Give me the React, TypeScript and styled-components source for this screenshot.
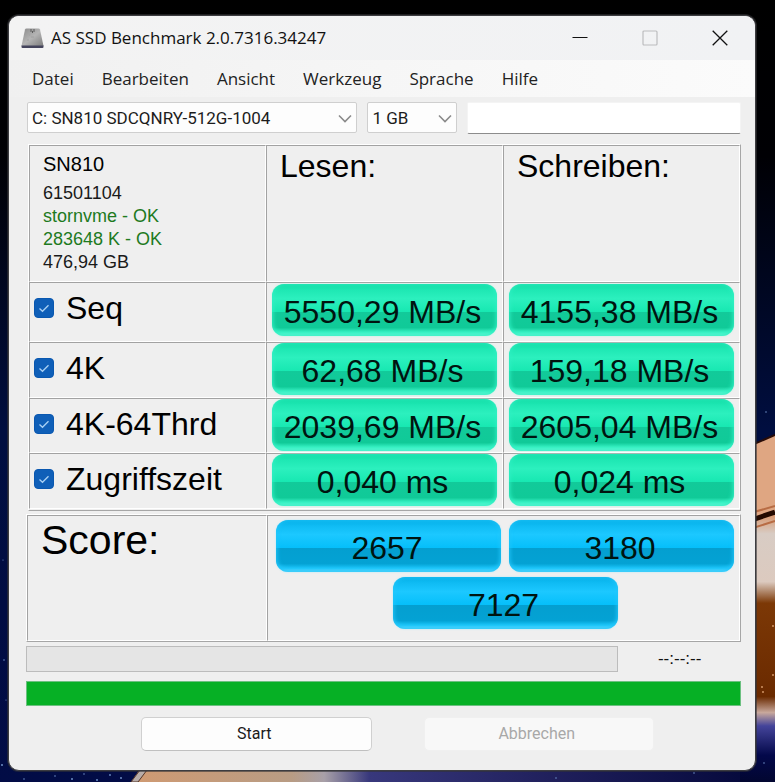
import React, { useState } from "react";
import styled, { createGlobalStyle } from "styled-components";

const GlobalStyle = createGlobalStyle`
  * { box-sizing: border-box; }
  body { margin: 0; background: #000; }
`;

const arial = `"Liberation Sans", Arial, sans-serif`;
const segoe = `"Open Sans", "Segoe UI", sans-serif`;
const dialog = `Roboto, "Liberation Sans", sans-serif`;

const Desktop = styled.div`
  position: relative;
  min-height: 100vh;
  padding: 15px 19px 11px 8px;
  overflow: hidden;
`;

const Wallpaper = styled.svg`
  position: absolute;
  inset: 0;
  width: 100%;
  height: 100%;
`;

const AppWindow = styled.main`
  position: relative;
  overflow: hidden;
  border: 1px solid #3c3c40;
  border-radius: 11px;
  background: #efefef;
  color: #000;
  box-shadow: 0 0 0 1px rgba(50, 50, 54, 0.6);
`;

const TitleBar = styled.header`
  display: flex;
  align-items: center;
  height: 44px;
  padding-left: 12px;
  background: linear-gradient(90deg, #f3f3f3, #f1f2f4);
`;

const Title = styled.h1`
  flex: 1;
  margin: 0 0 0 7px;
  font: 400 17px/24px ${segoe};
  color: #111;
  white-space: nowrap;
`;

const CaptionButton = styled.button`
  display: grid;
  place-items: center;
  width: 70px;
  height: 44px;
  padding: 0;
  border: 0;
  background: none;
  color: #111;
  &:disabled { color: #bcbcbe; }
`;

const MenuBar = styled.nav`
  display: flex;
  align-items: center;
  height: 37px;
  padding-left: 9px;
  background: linear-gradient(90deg, #f0f0f0, #f6f6f6 50%, #fbfbfb);
`;

const MenuItem = styled.button`
  padding: 0 14px;
  border: 0;
  background: none;
  font: 400 17px/24px ${segoe};
  color: #222;
`;

const Content = styled.div`
  padding: 5px 14px 19px 17px;
`;

const Toolbar = styled.div`
  display: flex;
  gap: 10px;
  margin: 0 0 10px 1px;
`;

const SelectBox = styled.div<{ $grow?: number; $width?: number }>`
  position: relative;
  flex: ${(p) => (p.$grow ? `${p.$grow} 1 0` : `0 0 ${p.$width}px`)};
  svg {
    position: absolute;
    right: 5px;
    top: 12px;
    pointer-events: none;
  }
`;

const Select = styled.select`
  appearance: none;
  display: block;
  width: 100%;
  height: 31px;
  padding: 0 24px 0 4px;
  border: 1px solid #cfcfcf;
  border-radius: 2px;
  background: #fdfdfd;
  font: 400 17px/28px ${dialog};
  color: #1c1c1c;
`;

const TextField = styled.input`
  flex: 272 1 0;
  min-width: 0;
  height: 32px;
  padding: 0;
  border: 1px solid #f4f4f4;
  border-bottom-color: #8c8c8c;
  border-radius: 2px;
  background: #fff;
  font: 400 17px/28px ${dialog};
`;

const Table = styled.table<{ $inset: number }>`
  width: calc(100% - ${(p) => p.$inset}px);
  margin-left: ${(p) => p.$inset}px;
  table-layout: fixed;
  border: 1px solid;
  border-color: #fff #a6a6a6 #a6a6a6 #fff;
  border-collapse: separate;
  border-spacing: 0;
  font-family: ${arial};
  th, td {
    padding: 0;
    border: 1px solid;
    border-color: #a2a2a2 #fff #fff #a2a2a2;
    vertical-align: top;
    text-align: left;
    font-weight: 400;
  }
`;

const ResultTable = styled(Table)`
  padding-bottom: 1px;
  margin-bottom: 3px;
`;

const ScoreTable = styled(Table)`
  margin-bottom: 4px;
`;

const ScoreLabelColumn = styled.col`
  width: 240px;
`;

const Row = styled.tr<{ $height: number }>`
  height: ${(p) => p.$height}px;
`;

const DriveInfo = styled.div`
  padding: 6px 0 0 13px;
  font-size: 18px;
  line-height: 23px;
  white-space: nowrap;
`;

const DriveName = styled.div`
  margin-bottom: 6px;
  font-size: 20px;
  line-height: 24px;
`;

const InfoLine = styled.div<{ $ok?: boolean }>`
  color: ${(p) => (p.$ok ? "#1e7a1e" : "#1a1a1a")};
`;

const ColumnTitle = styled.div`
  padding: 2px 0 0 13px;
  font-size: 32px;
  line-height: 36px;
`;

const ScoreTitle = styled.div`
  padding: 2px 0 0 13px;
  font-size: 41px;
  line-height: 44px;
`;

const TestLabel = styled.label`
  display: flex;
  align-items: center;
  gap: 12px;
  padding: 5px 0 0 4px;
  font-size: 32px;
  line-height: 40px;
  color: #000;
  white-space: nowrap;
`;

const CheckWrap = styled.span`
  position: relative;
  display: grid;
  width: 20px;
  height: 20px;
  svg {
    position: absolute;
    inset: 0;
    pointer-events: none;
  }
`;

const CheckInput = styled.input`
  appearance: none;
  width: 20px;
  height: 20px;
  margin: 0;
  border: 1px solid #8a8a8a;
  border-radius: 4px;
  background: #fff;
  &:checked { border-color: #0a58b0; background: #0f5fb8; }
`;

const ValueCell = styled.td<{ $top: number }>`
  && { padding: ${(p) => p.$top}px 5px 0; }
`;

const Pill = styled.div<{ $tone: "green" | "blue" }>`
  height: 52px;
  padding: 4px 4px 0 0;
  border-radius: 12px;
  background: ${(p) =>
    p.$tone === "green"
      ? "linear-gradient(#12dca4, #1fe8b4 12%, #2cf0be 28%, #18e8b2 53%, #12ca9a 54%, #10ca98 84%, #3af2c4 93%, #8cf8de)"
      : "linear-gradient(#06b0e8, #10bcf4 12%, #1cc8ff 28%, #06bffa 53%, #049fd0 54%, #04a2d4 84%, #1cc6fa 93%, #8ce4ff)"};
  box-shadow:
    inset 0 -1px 4px 1px ${(p) => (p.$tone === "green" ? "#30f0c4" : "#22c6fa")},
    0 0 2px ${(p) => (p.$tone === "green" ? "#a8f6e0" : "#a8e8fc")};
  font-size: 32px;
  line-height: 48px;
  text-align: center;
  white-space: nowrap;
  color: #001410;
`;

const ScoreGrid = styled.div`
  display: flex;
  flex-wrap: wrap;
  justify-content: center;
  gap: 5px 8px;
  padding: 4px 5px 0 8px;
  ${Pill} {
    width: calc((100% - 8px) / 2);
    padding-right: 3px;
  }
`;

const ProgressRow = styled.div`
  display: flex;
  align-items: center;
  margin-bottom: 9px;
`;

const ProgressTrack = styled.div`
  flex: 592 1 0;
  height: 26px;
  border: 1px solid #bcbcbc;
  background: #e5e5e5;
`;

const Clock = styled.div`
  flex: 123 1 0;
  text-align: center;
  font: 400 17px/24px ${arial};
  color: #111;
`;

const TotalProgress = styled.div`
  height: 25px;
  margin-bottom: 11px;
  border: 1px solid #6cc080;
  background: #06b025;
`;

const Actions = styled.div`
  display: flex;
  gap: 52px;
  padding: 0 87px 0 115px;
`;

const ActionButton = styled.button`
  flex: 1;
  height: 34px;
  padding: 0 4px 0 0;
  border: 1px solid #d0d0d0;
  border-bottom-color: #c0c0c0;
  border-radius: 5px;
  background: #fdfdfd;
  font: 400 16px/24px ${dialog};
  color: #1a1a1a;
  &:disabled {
    border-color: #f0f0f0;
    background: #f8f8f8;
    color: #a8a8a8;
  }
`;

const menus = ["Datei", "Bearbeiten", "Ansicht", "Werkzeug", "Sprache", "Hilfe"];

const tests = [
  { name: "Seq", read: "5550,29 MB/s", write: "4155,38 MB/s", height: 60, top: 1 },
  { name: "4K", read: "62,68 MB/s", write: "159,18 MB/s", height: 56, top: 0 },
  { name: "4K-64Thrd", read: "2039,69 MB/s", write: "2605,04 MB/s", height: 55, top: 0 },
  { name: "Zugriffszeit", read: "0,040 ms", write: "0,024 ms", height: 56, top: 0 },
];

function Chevron() {
  return (
    <svg width="14" height="9" viewBox="0 0 14 9" fill="none" aria-hidden="true">
      <path d="M1 1.5 7 7.5 13 1.5" stroke="#8a8a8a" strokeWidth="1.6" />
    </svg>
  );
}

function DriveIcon() {
  return (
    <svg width="23" height="21" viewBox="0 0 23 21" aria-hidden="true">
      <defs>
        <linearGradient id="drive" x1="0" y1="0" x2="1" y2="1">
          <stop offset="0" stopColor="#8a8a8a" />
          <stop offset="0.5" stopColor="#b4b4b4" />
          <stop offset="1" stopColor="#7c7c7c" />
        </linearGradient>
      </defs>
      <path d="M4 1.5Q4.3.5 5.5.5H17.5Q18.7.5 19 1.5L22.5 18H.5Z" fill="url(#drive)" />
      <path d="M.5 17.500H22.5V19Q22.5 20 21.5 20H1.5Q.5 20 .5 19Z" fill="#44445c" />
      <path d="M10 1V4M13 1V4M11.5 3V5" stroke="#5c5c5c" strokeWidth="1" />
      <path d="M6 12h2M10 9h3M15 12h2M8 7h1" stroke="#a0a0a0" strokeWidth="1" />
    </svg>
  );
}

function Scene() {
  return (
    <Wallpaper viewBox="0 0 775 782" preserveAspectRatio="none" aria-hidden="true">
      <defs>
        <linearGradient id="sky" x1="0" y1="0" x2="0" y2="1">
          <stop offset="0" stopColor="#000" />
          <stop offset="0.2" stopColor="#000004" />
          <stop offset="0.55" stopColor="#000e40" />
          <stop offset="1" stopColor="#020c46" />
        </linearGradient>
        <linearGradient id="planet" gradientUnits="userSpaceOnUse" x1="0" y1="515" x2="0" y2="782">
          <stop offset="0" stopColor="#d89870" />
          <stop offset="0.07" stopColor="#d8ccc4" />
          <stop offset="0.25" stopColor="#dccabf" />
          <stop offset="0.33" stopColor="#7c3806" />
          <stop offset="0.68" stopColor="#6a2a00" />
          <stop offset="0.74" stopColor="#c8a89c" />
          <stop offset="0.79" stopColor="#44449a" />
          <stop offset="0.9" stopColor="#03084a" />
          <stop offset="1" stopColor="#020630" />
        </linearGradient>
        <linearGradient id="floor" x1="0" y1="0" x2="1" y2="0">
          <stop offset="0" stopColor="#d09a72" />
          <stop offset="0.25" stopColor="#b89c84" />
          <stop offset="0.3" stopColor="#a8a0a8" />
          <stop offset="0.37" stopColor="#38387c" />
          <stop offset="0.65" stopColor="#20205c" />
          <stop offset="1" stopColor="#020638" />
        </linearGradient>
      </defs>
      <rect width="775" height="782" fill="url(#sky)" />
      <path d="M145 762H775V782H131Z" fill="url(#floor)" />
      <path d="M146 762 131 782H138L153 762Z" fill="#b8aca8" stroke="#54362a" />
      <path d="M740 515H775V782H740Z" fill="url(#planet)" />
      <path d="M740 450 775 435V514L740 524Z" fill="#dfa682" />
      <path d="M740 450 775 435" stroke="#280c08" strokeWidth="2" />
      <path d="M740 524 775 512" stroke="#240a00" strokeWidth="5" />
      <path d="M740 516 775 506M740 532 775 521" stroke="#b86c44" strokeWidth="2" />
      <g fill="#6c8cc4">
        <circle cx="4" cy="660" r="0.8" />
        <circle cx="2" cy="765" r="1" />
        <circle cx="6" cy="700" r="0.6" />
        <circle cx="3" cy="560" r="0.6" />
        <circle cx="24" cy="779" r="0.8" />
        <circle cx="55" cy="776" r="0.8" />
        <circle cx="72" cy="779" r="1" />
        <circle cx="84" cy="774" r="0.8" />
        <circle cx="97" cy="780" r="1" />
        <circle cx="110" cy="775" r="0.9" />
        <circle cx="121" cy="778" r="1" />
        <circle cx="556" cy="778" r="0.8" />
        <circle cx="694" cy="773" r="0.8" />
        <circle cx="764" cy="763" r="0.8" />
        <circle cx="766" cy="412" r="0.8" />
      </g>
      <g fill="#dca070">
        <circle cx="762" cy="687" r="0.9" />
        <circle cx="763" cy="692" r="0.9" />
        <circle cx="773" cy="675" r="0.9" />
        <circle cx="773" cy="626" r="0.9" />
      </g>
    </Wallpaper>
  );
}

function TestCheck({ name }: { name: string }) {
  const [on, setOn] = useState(true);
  return (
    <TestLabel>
      <CheckWrap>
        <CheckInput type="checkbox" checked={on} onChange={() => setOn(!on)} />
        {on && (
          <svg width="20" height="20" viewBox="0 0 20 20" fill="none" aria-hidden="true">
            <path d="M5.5 10.5 8.5 13.3 14.5 7.2" stroke="#a8d0f4" strokeWidth="1.3" />
          </svg>
        )}
      </CheckWrap>
      {name}
    </TestLabel>
  );
}

export default function App() {
  return (
    <Desktop>
      <GlobalStyle />
      <Scene />
      <AppWindow>
        <TitleBar>
          <DriveIcon />
          <Title>AS SSD Benchmark 2.0.7316.34247</Title>
          <CaptionButton aria-label="Minimieren">
            <svg width="16" height="16" viewBox="0 0 16 16"><path d="M.5 7.5H15.5" stroke="currentColor" strokeWidth="1" /></svg>
          </CaptionButton>
          <CaptionButton aria-label="Maximieren" disabled>
            <svg width="16" height="16" viewBox="0 0 16 16"><rect x="1" y="1" width="14" height="14" rx="1" fill="none" stroke="currentColor" strokeWidth="1.2" /></svg>
          </CaptionButton>
          <CaptionButton aria-label="Schließen">
            <svg width="16" height="16" viewBox="0 0 16 16"><path d="M.7.7 15.3 15.3M15.3.7.7 15.3" stroke="currentColor" strokeWidth="1.3" /></svg>
          </CaptionButton>
        </TitleBar>
        <MenuBar>
          {menus.map((m) => <MenuItem key={m}>{m}</MenuItem>)}
        </MenuBar>
        <Content>
          <Toolbar>
            <SelectBox $grow={331}>
              <Select aria-label="Laufwerk"><option>C: SN810 SDCQNRY-512G-1004</option></Select>
              <Chevron />
            </SelectBox>
            <SelectBox $width={90}>
              <Select aria-label="Testgröße"><option>1 GB</option></Select>
              <Chevron />
            </SelectBox>
            <TextField type="text" aria-label="Notiz" />
          </Toolbar>
          <ResultTable $inset={2}>
            <thead>
              <Row $height={137}>
                <th scope="col">
                  <DriveInfo>
                    <DriveName>SN810</DriveName>
                    <InfoLine>61501104</InfoLine>
                    <InfoLine $ok>stornvme - OK</InfoLine>
                    <InfoLine $ok>283648 K - OK</InfoLine>
                    <InfoLine>476,94 GB</InfoLine>
                  </DriveInfo>
                </th>
                <th scope="col"><ColumnTitle>Lesen:</ColumnTitle></th>
                <th scope="col"><ColumnTitle>Schreiben:</ColumnTitle></th>
              </Row>
            </thead>
            <tbody>
              {tests.map((t) => (
                <Row key={t.name} $height={t.height}>
                  <th scope="row"><TestCheck name={t.name} /></th>
                  <ValueCell $top={t.top}><Pill $tone="green">{t.read}</Pill></ValueCell>
                  <ValueCell $top={t.top}><Pill $tone="green">{t.write}</Pill></ValueCell>
                </Row>
              ))}
            </tbody>
          </ResultTable>
          <ScoreTable $inset={0}>
            <colgroup>
              <ScoreLabelColumn />
              <col />
            </colgroup>
            <tbody>
              <Row $height={126}>
                <th scope="row"><ScoreTitle>Score:</ScoreTitle></th>
                <td>
                  <ScoreGrid>
                    <Pill $tone="blue">2657</Pill>
                    <Pill $tone="blue">3180</Pill>
                    <Pill $tone="blue">7127</Pill>
                  </ScoreGrid>
                </td>
              </Row>
            </tbody>
          </ScoreTable>
          <ProgressRow>
            <ProgressTrack role="progressbar" aria-label="Test" aria-valuenow={0} />
            <Clock>--:--:--</Clock>
          </ProgressRow>
          <TotalProgress role="progressbar" aria-label="Gesamt" aria-valuenow={100} />
          <Actions>
            <ActionButton>Start</ActionButton>
            <ActionButton disabled>Abbrechen</ActionButton>
          </Actions>
        </Content>
      </AppWindow>
    </Desktop>
  );
}
